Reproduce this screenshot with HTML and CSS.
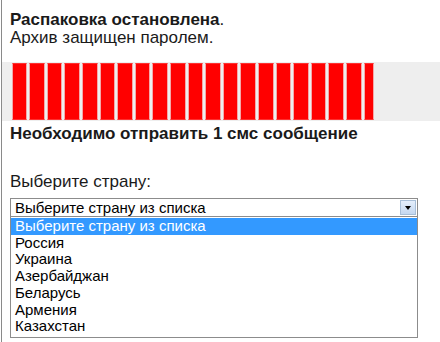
FILE: index.html
```html
<!DOCTYPE html>
<html lang="ru">
<head>
    <meta charset="UTF-8">
    <title>Распаковка остановлена</title>
    <link rel="stylesheet" href="styles.css">
</head>
<body>
    <div class="page">
        <div class="status">
            <p><b>Распаковка остановлена</b>.</p>
            <p>Архив защищен паролем.</p>
        </div>

        <div class="progress" id="progress"></div>

        <p class="notice">Необходимо отправить 1 смс сообщение</p>

        <div class="country">
            <p class="label">Выберите страну:</p>
            <div class="select">
                <span class="select-value">Выберите страну из списка</span>
                <span class="select-arrow"></span>
            </div>
            <ul class="options">
                <li class="selected">Выберите страну из списка</li>
                <li>Россия</li>
                <li>Украина</li>
                <li>Азербайджан</li>
                <li>Беларусь</li>
                <li>Армения</li>
                <li>Казахстан</li>
            </ul>
        </div>
    </div>

    <script>
        // 20 full blocks and a partial one at the end
        const progress = document.getElementById('progress');
        for (let i = 0; i < 21; i++) {
            const block = document.createElement('span');
            block.className = i === 20 ? 'block block-last' : 'block';
            progress.appendChild(block);
        }
    </script>
</body>
</html>
```

FILE: styles.css
```css
* {
    margin: 0;
    padding: 0;
    box-sizing: border-box;
}

body {
    font-family: 'Liberation Sans', Arial, sans-serif;
    color: #1a1a1a;
    background: #fff;
    overflow: hidden;
}

.page {
    margin-left: 1px;
    border-left: 1px solid #8a8a8a;
    min-height: 342px;
    padding-top: 11px;
}

.status {
    padding-left: 8px;
    font-size: 17px;
    line-height: 18px;
}

.progress {
    display: flex;
    gap: 2px;
    margin-top: 15px;
    height: 59px;
    padding: 1px 0 1px 9.7px;
    background: #eeeeee;
}

.block {
    width: 15.6px;
    height: 100%;
    background: #ff0000;
    border: 1px solid #f4a8a8;
    border-top-color: #ff3030;
    border-bottom-color: #ff3030;
}

.block-last {
    width: 10.6px;
}

.notice {
    margin-top: 4px;
    padding-left: 8px;
    font-size: 17px;
    font-weight: bold;
    line-height: 18px;
}

.country {
    padding-left: 8px;
}

.label {
    margin-top: 29px;
    font-size: 17px;
    line-height: 19px;
}

.select {
    display: flex;
    align-items: center;
    justify-content: space-between;
    width: 408px;
    height: 19px;
    margin-top: 7px;
    padding: 1px 1px 1px 4px;
    border: 1px solid #8c8c8c;
    font-size: 15px;
    color: #000;
}

.select-arrow {
    position: relative;
    width: 16px;
    height: 15px;
    border: 1px solid #a8bfd8;
    background: linear-gradient(#e4eefb, #c5d8f0);
}

.select-arrow::after {
    content: '';
    position: absolute;
    left: 4px;
    top: 5px;
    border-left: 3.5px solid transparent;
    border-right: 3.5px solid transparent;
    border-top: 4px solid #000;
}

.options {
    list-style: none;
    width: 408px;
    padding: 1px 0 2px;
    border: 1px solid #8c8c8c;
    border-top: none;
    font-size: 15px;
    line-height: 16.7px;
    color: #000;
}

.options li {
    padding-left: 4px;
}

.options .selected {
    background: #3399ff;
    color: #fff;
}
```
